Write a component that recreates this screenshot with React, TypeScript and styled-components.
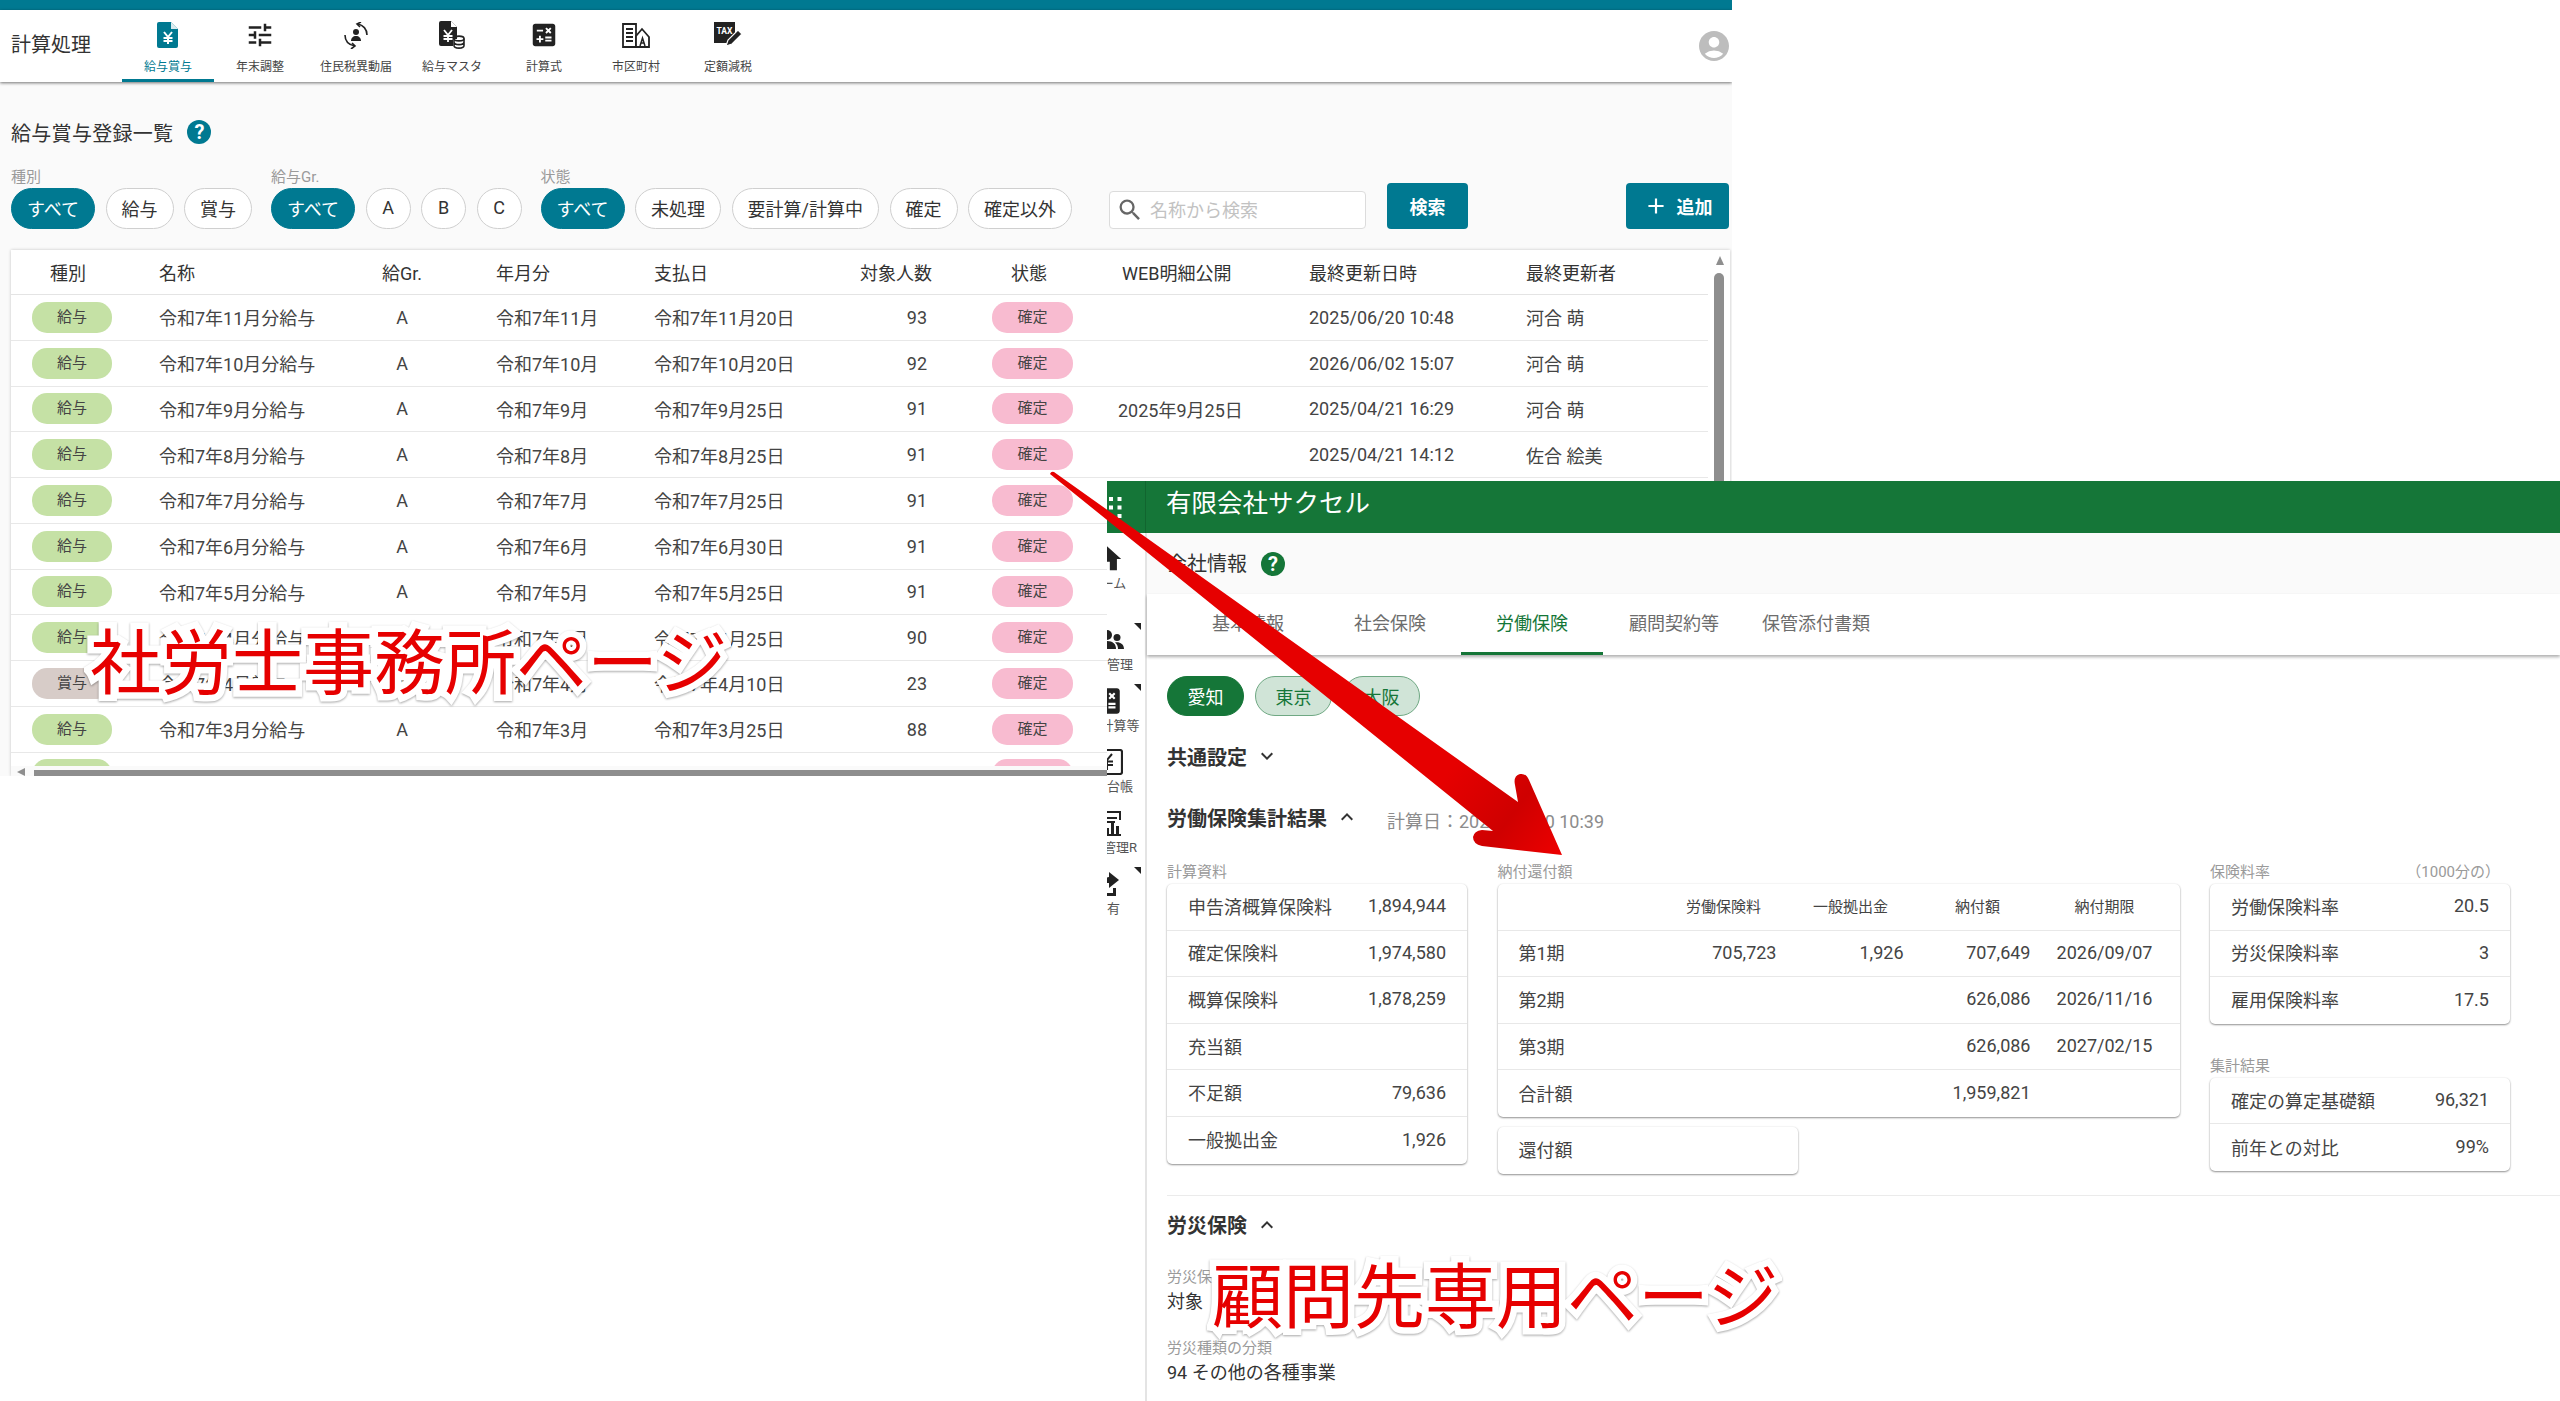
import React from "react";
import styled, { createGlobalStyle } from "styled-components";
import {
  MdAccountCircle,
  MdAdd,
  MdCalculate,
  MdHome,
  MdKeyboardArrowDown,
  MdKeyboardArrowUp,
  MdSearch,
  MdTune,
} from "react-icons/md";

const TEAL = "#007991";
const GREEN = "#157638";
const TEXT = "#3c3c3c";

const GlobalStyle = createGlobalStyle`
  html, body {
    margin: 0;
    background: #fff;
    font-family: Roboto, "Noto Sans CJK JP", sans-serif;
    color: ${TEXT};
  }
  * { box-sizing: border-box; }
`;

const Desktop = styled.div`
  position: relative;
  width: 2560px;
  height: 1401px;
  overflow: hidden;
  background: #fff;
`;

/* ---------- payroll window ---------- */

const PayrollWindow = styled.div`
  width: 1732px;
  height: 776px;
  background: #fafafa;
  display: flex;
  flex-direction: column;
  overflow: hidden;
`;

const TopStripe = styled.div`
  height: 10px;
  flex: none;
  background: ${TEAL};
`;

const AppBar = styled.div`
  height: 72px;
  flex: none;
  display: flex;
  align-items: stretch;
  background: #fff;
  box-shadow: 0 1px 3px rgba(0, 0, 0, 0.55);
  padding-left: 11px;
`;

const AppTitle = styled.div`
  width: 111px;
  font-size: 20px;
  line-height: 70px;
  color: #333;
`;

const NavTab = styled.div<{ $active?: boolean }>`
  min-width: 92px;
  padding: 11px 14px 0;
  display: flex;
  flex-direction: column;
  align-items: center;
  font-size: 12px;
  color: ${(p) => (p.$active ? TEAL : "#444")};
  border-bottom: 3px solid ${(p) => (p.$active ? TEAL : "transparent")};
`;

const NavIcon = styled.div`
  height: 28px;
  display: flex;
  align-items: center;
  justify-content: center;
  color: #222;
  margin-bottom: 8px;
`;

const Avatar = styled.div`
  margin-left: auto;
  display: flex;
  align-items: center;
  color: #bdbdbd;
`;

const PayrollBody = styled.div`
  flex: 1;
  min-height: 0;
  padding: 38px 2px 0 11px;
  display: flex;
  flex-direction: column;
`;

const HeadingRow = styled.div`
  display: flex;
  align-items: center;
  gap: 14px;
  height: 24px;
  margin-bottom: 25px;
`;

const Heading = styled.div`
  font-size: 20px;
  color: #333;
  letter-spacing: 0.3px;
`;

const HelpDot = styled.span<{ $color: string }>`
  width: 24px;
  height: 24px;
  border-radius: 50%;
  background: ${(p) => p.$color};
  color: #fff;
  font-size: 20px;
  font-weight: 700;
  display: flex;
  align-items: center;
  justify-content: center;
`;

const Toolbar = styled.div`
  display: flex;
  align-items: flex-end;
  height: 60px;
  flex: none;
`;

const FilterGroup = styled.div`
  margin-right: 19px;
`;

const FilterLabel = styled.div`
  font-size: 15px;
  line-height: 17px;
  color: #9a9a9a;
  margin-bottom: 2px;
`;

const ChipRow = styled.div`
  display: flex;
  gap: 10.5px;
`;

const Chip = styled.div<{ $on?: boolean }>`
  height: 41px;
  min-width: 45px;
  padding: 0 15px 2px;
  border-radius: 21px;
  display: flex;
  align-items: center;
  justify-content: center;
  font-size: 18px;
  background: ${(p) => (p.$on ? TEAL : "#fff")};
  color: ${(p) => (p.$on ? "#fff" : "#333")};
  border: 1px solid ${(p) => (p.$on ? TEAL : "#cfcfcf")};
`;

const SearchBox = styled.label`
  margin-left: 18px;
  width: 257px;
  height: 38px;
  display: flex;
  align-items: center;
  gap: 4px;
  padding-left: 6px;
  background: #fff;
  border: 1px solid #dcdcdc;
  border-radius: 4px;
  color: #666;
`;

const SearchInput = styled.input`
  border: 0;
  outline: 0;
  flex: 1;
  min-width: 0;
  background: transparent;
  font: inherit;
  font-size: 18px;
  &::placeholder {
    color: #c2c2c2;
    opacity: 1;
  }
`;

const ActionButton = styled.div<{ $wide?: boolean }>`
  height: 46px;
  width: ${(p) => (p.$wide ? "103px" : "81px")};
  margin-left: ${(p) => (p.$wide ? "auto" : "21px")};
  margin-right: ${(p) => (p.$wide ? "1px" : "0")};
  background: ${TEAL};
  color: #fff;
  border-radius: 4px;
  font-size: 18px;
  font-weight: 700;
  display: flex;
  align-items: center;
  justify-content: center;
  gap: 8px;
`;

const TableCard = styled.div`
  position: relative;
  margin-top: 21px;
  flex: 1;
  min-height: 0;
  background: #fff;
  box-shadow: 0 0 3px rgba(0, 0, 0, 0.22);
  overflow: hidden;
`;

const TableGrid = styled.div`
  width: 1697px;
`;

const PAY_COLUMNS = "148px 218px 50px 227px 206px 71px 187px 191px 217px 182px";

const HeadRow = styled.div`
  display: grid;
  grid-template-columns: ${PAY_COLUMNS};
  height: 45px;
  align-items: center;
  font-size: 18px;
  color: #333;
  border-bottom: 1px solid #e4e4e4;
`;

const BodyRow = styled.div`
  display: grid;
  grid-template-columns: ${PAY_COLUMNS};
  height: 45.75px;
  align-items: center;
  font-size: 18px;
  color: #444;
  border-bottom: 1px solid #e8e8e8;
`;

const Cell = styled.div<{ $pad?: number; $align?: string; $padRight?: number }>`
  padding-left: ${(p) => p.$pad ?? 0}px;
  padding-right: ${(p) => p.$padRight ?? 0}px;
  text-align: ${(p) => p.$align ?? "left"};
  white-space: nowrap;
`;

const Pill = styled.div<{ $bg: string; $width: number }>`
  width: ${(p) => p.$width}px;
  height: 31px;
  border-radius: 15px;
  background: ${(p) => p.$bg};
  font-size: 15px;
  line-height: 30px;
  text-align: center;
  color: #444;
`;

const VScrollArrow = styled.div`
  position: absolute;
  left: 1705px;
  top: 6px;
  width: 0;
  height: 0;
  border-left: 4px solid transparent;
  border-right: 4px solid transparent;
  border-bottom: 9px solid #8e8e8e;
`;

const VScrollThumb = styled.div`
  position: absolute;
  left: 1703px;
  top: 23px;
  width: 10px;
  bottom: 40px;
  border-radius: 5px;
  background: #8e8e8e;
`;

const HScrollTrack = styled.div`
  position: absolute;
  left: 0;
  right: 0;
  bottom: 0;
  height: 10px;
  background: #fafafa;
`;

const HScrollThumb = styled.div`
  position: absolute;
  left: 23px;
  right: 0;
  bottom: 0;
  height: 6px;
  background: #8e8e8e;
`;

const HScrollArrow = styled.div`
  position: absolute;
  left: 6px;
  bottom: 0;
  width: 0;
  height: 0;
  border-top: 4px solid transparent;
  border-bottom: 4px solid transparent;
  border-right: 8px solid #8e8e8e;
`;

/* ---------- client window ---------- */

const ClientWindow = styled.div`
  position: absolute;
  left: 1107px;
  top: 481px;
  right: 0;
  bottom: 0;
  display: flex;
  flex-direction: column;
  background: #fff;
`;

const GreenBar = styled.div`
  height: 52px;
  flex: none;
  background: ${GREEN};
  color: #fff;
  display: flex;
  align-items: center;
`;

const GridHandle = styled.div`
  width: 39px;
  height: 100%;
  display: flex;
  align-items: center;
  padding-left: 2px;
  border-right: 1px solid #11652f;
`;

const CompanyName = styled.div`
  margin-left: 20px;
  font-size: 25.5px;
  margin-top: -14px;
`;

const ClientBody = styled.div`
  flex: 1;
  min-height: 0;
  display: flex;
`;

const SideRail = styled.div`
  width: 40px;
  flex: none;
  overflow: hidden;
  border-right: 2px solid #e4e4e4;
  background: #fff;
`;

const SideInner = styled.div`
  width: 76px;
  margin-left: -38px;
  padding-top: 9px;
  display: flex;
  flex-direction: column;
`;

const SideItem = styled.div<{ $height: number }>`
  position: relative;
  height: ${(p) => p.$height}px;
  display: flex;
  flex-direction: column;
  align-items: center;
  font-size: 13px;
  color: #555;
  white-space: nowrap;
`;

const SideIcon = styled.div`
  height: 34px;
  display: flex;
  align-items: center;
  justify-content: center;
  color: #222;
  margin-bottom: -3px;
`;

const Corner = styled.div`
  position: absolute;
  right: 4px;
  top: 0;
  width: 0;
  height: 0;
  border-top: 7px solid #222;
  border-left: 7px solid transparent;
`;

const ClientMain = styled.div`
  flex: 1;
  min-width: 0;
  display: flex;
  flex-direction: column;
`;

const PageHead = styled.div`
  height: 61px;
  flex: none;
  background: #fafafa;
  display: flex;
  align-items: center;
  gap: 14px;
  padding-left: 20px;
`;

const PageTitle = styled.div`
  font-size: 20px;
  color: #333;
  margin-top: -2px;
`;

const TabBar = styled.div`
  height: 61px;
  flex: none;
  display: flex;
  padding-left: 30px;
  background: #fff;
  box-shadow: 0 2px 3px rgba(0, 0, 0, 0.32);
`;

const ClientTab = styled.div<{ $active?: boolean }>`
  width: 142px;
  text-align: center;
  line-height: 60px;
  font-size: 18px;
  white-space: nowrap;
  color: ${(p) => (p.$active ? GREEN : "#6d6d6d")};
  border-bottom: 3px solid ${(p) => (p.$active ? GREEN : "transparent")};
`;

const ClientContent = styled.div`
  flex: 1;
  padding: 21px 0 0 20px;
`;

const PrefRow = styled.div`
  display: flex;
  gap: 11px;
  margin-bottom: 24px;
`;

const PrefChip = styled.div<{ $on?: boolean }>`
  width: 77px;
  height: 40px;
  border-radius: 20px;
  display: flex;
  align-items: center;
  justify-content: center;
  font-size: 18px;
  background: ${(p) => (p.$on ? GREEN : "#d0e4d7")};
  color: ${(p) => (p.$on ? "#fff" : GREEN)};
  border: 1px solid ${(p) => (p.$on ? GREEN : "#6fa883")};
`;

const SectionHead = styled.div<{ $top?: number; $gap: number }>`
  display: flex;
  align-items: center;
  height: 32px;
  font-size: 20px;
  font-weight: 700;
  color: #333;
  margin-top: ${(p) => p.$top ?? 0}px;
  margin-bottom: ${(p) => p.$gap}px;
`;

const ChevronDown = styled(MdKeyboardArrowDown)`
  margin-left: 8px;
`;

const ChevronUp = styled(MdKeyboardArrowUp)`
  margin-left: 8px;
`;

const CalcDate = styled.span`
  margin-left: 28px;
  margin-top: 5px;
  font-size: 18px;
  font-weight: 400;
  color: #8c8c8c;
`;

const CardsGrid = styled.div`
  display: grid;
  grid-template-columns: 300px 682px 300px;
  column-gap: 30.5px;
  padding-bottom: 21px;
  border-bottom: 1px solid #ebebeb;
`;

const Stack = styled.div`
  display: flex;
  flex-direction: column;
`;

const CardLabel = styled.div<{ $top?: number }>`
  display: flex;
  justify-content: space-between;
  padding-right: 10px;
  height: 20px;
  line-height: 20px;
  font-size: 15px;
  color: #9a9a9a;
  margin-top: ${(p) => p.$top ?? 0}px;
  margin-bottom: 2px;
`;

const Card = styled.div<{ $width?: number }>`
  width: ${(p) => (p.$width ? `${p.$width}px` : "auto")};
  background: #fff;
  border-radius: 5px;
  box-shadow: 0 1px 2px rgba(0, 0, 0, 0.42), 0 0 2px rgba(0, 0, 0, 0.08);
  overflow: hidden;
`;

const KeyRow = styled.div`
  height: 46.6px;
  padding: 0 21px 2px;
  display: flex;
  align-items: center;
  justify-content: space-between;
  font-size: 18px;
  color: #444;
  border-bottom: 1px solid #e8e8e8;
  &:last-child {
    border-bottom: 0;
  }
`;

const PayTableRow = styled.div<{ $small?: boolean }>`
  height: 46.6px;
  padding-bottom: 2px;
  display: grid;
  grid-template-columns: 162.5px 127px 127px 127px 127px;
  align-items: center;
  font-size: ${(p) => (p.$small ? "15px" : "18px")};
  color: #444;
  border-bottom: 1px solid #e8e8e8;
  &:last-child {
    border-bottom: 0;
  }
`;

const RowTitle = styled.div`
  padding-left: 21px;
`;

const Money = styled.div`
  text-align: right;
  padding-right: 10.5px;
`;

const Center = styled.div`
  text-align: center;
`;

const Refund = styled(Card)`
  margin-top: 10px;
`;

const FieldLabel = styled.div<{ $top: number }>`
  font-size: 15px;
  color: #9a9a9a;
  line-height: 20px;
  margin-top: ${(p) => p.$top}px;
`;

const FieldValue = styled.div`
  font-size: 18px;
  line-height: 26px;
  color: #333;
  margin-top: 2px;
`;

/* ---------- overlays ---------- */

const Callout = styled.div<{ $left: number; $top: number }>`
  position: absolute;
  left: ${(p) => p.$left}px;
  top: ${(p) => p.$top}px;
  font-family: "Noto Sans CJK JP", sans-serif;
  font-size: 71px;
  line-height: 1;
  font-weight: 400;
  white-space: nowrap;
  color: #e60000;
  -webkit-text-stroke: 13px #fff;
  paint-order: stroke fill;
  filter: drop-shadow(0 1px 1px rgba(0, 0, 0, 0.35));
`;

const ArrowLayer = styled.svg`
  position: absolute;
  left: 0;
  top: 0;
  pointer-events: none;
`;

/* ---------- drawn icons ---------- */

const YenDoc = () => (
  <svg width="22" height="26" viewBox="0 0 22 26">
    <path d="M2 0h12l7 7v17a2 2 0 0 1-2 2H2a2 2 0 0 1-2-2V2a2 2 0 0 1 2-2z" fill={TEAL} />
    <path d="M14 0l7 7h-7z" fill="#fff" opacity="0.85" />
    <path d="M7 10l4 5 4-5M6.5 16h9M6.5 19h9M11 15v7" stroke="#fff" strokeWidth="2" fill="none" />
  </svg>
);

const ResidentTax = () => (
  <svg width="28" height="27" viewBox="0 0 28 27" fill="none" stroke="#222" strokeWidth="1.6">
    <path d="M16 2c5 1 9 5 9 11" />
    <path d="M19 0l-4 2 3 3" />
    <path d="M3 13c0 6 4 10 10 11" />
    <path d="M9 27l4-3-3-3" />
    <circle cx="14" cy="10" r="3" fill="#222" stroke="none" />
    <path d="M9 19c0-3 2-5 5-5s5 2 5 5z" fill="#222" stroke="none" />
  </svg>
);

const YenCoins = () => (
  <svg width="26" height="28" viewBox="0 0 26 28">
    <path d="M2 0h10l6 6v12h-4v7H2a2 2 0 0 1-2-2V2a2 2 0 0 1 2-2z" fill="#222" />
    <path d="M12 0l6 6h-6z" fill="#fff" />
    <path d="M5 9l4 5 4-5M4.5 15h9M4.5 18h9M9 14v7" stroke="#fff" strokeWidth="1.8" fill="none" />
    <ellipse cx="20" cy="17.5" rx="5" ry="2.4" fill="none" stroke="#222" strokeWidth="1.6" />
    <path d="M15 17.5v7c0 1.4 2.2 2.6 5 2.6s5-1.2 5-2.6v-7M15 21c0 1.4 2.2 2.6 5 2.6s5-1.2 5-2.6" fill="none" stroke="#222" strokeWidth="1.6" />
  </svg>
);

const TownDoc = () => (
  <svg width="28" height="25" viewBox="0 0 28 25" fill="none" stroke="#222" strokeWidth="1.8">
    <path d="M1 1h13v23H1z" />
    <path d="M4 6h7M4 10h7M4 14h7M4 18h7" />
    <path d="M14 13l6-7 7 8v10H14z" fill="#fff" />
    <path d="M18 23l2.5-8 2.5 8M19 20h3" strokeWidth="1.5" />
  </svg>
);

const TaxPen = () => (
  <svg width="28" height="26" viewBox="0 0 28 26">
    <path d="M0 0h21v15l-6 6H0z" fill="#222" />
    <text x="10.5" y="12" textAnchor="middle" fontSize="8.5" fontWeight="700" fill="#fff" fontFamily="Roboto, sans-serif">
      TAX
    </text>
    <path d="M12 24l2-6 10-10 4 4-10 10z" fill="#222" stroke="#fff" strokeWidth="1.2" />
  </svg>
);

const Dots = () => (
  <svg width="13" height="21" viewBox="0 0 13 21" fill="#fff">
    {[0, 8.5, 17].map((y) =>
      [0, 8.5].map((x) => <rect key={`${x}-${y}`} x={x} y={y} width="4" height="4" />)
    )}
  </svg>
);

const TeamIcon = () => (
  <svg width="38" height="20" viewBox="0 0 38 20" fill="#222">
    <circle cx="4" cy="5" r="4.5" />
    <circle cx="19" cy="5" r="5" />
    <circle cx="29" cy="7.5" r="3.5" />
    <path d="M9 19c0-5 4-8 10-8s9 3 9 8zM27 12.5c4-1 9 1 9 6.5h-6c0-3-1-5-3-6.5z" />
  </svg>
);

const LedgerIcon = () => (
  <svg width="32" height="26" viewBox="0 0 32 26" fill="none" stroke="#222" strokeWidth="2.2">
    <rect x="1" y="1" width="30" height="24" rx="2" />
    <path d="M11 5l5 6 5-6M10 12.5h12M10 16h12M16 11v10" strokeWidth="2" />
  </svg>
);

const ReportIcon = () => (
  <svg width="36" height="26" viewBox="0 0 36 26" fill="#222">
    <path d="M6 1h26v9h-2V3H8v4H6zM14 7h14v2H14zM8 12h5v2H8zM17 11h9v2h-9zM6 18h3v2H6z" />
    <path d="M17 24v-6h3v6zM22 24V13h3v11zM27 24v-8h3v8zM15 24h17v2H15z" />
  </svg>
);

const ShareIcon = () => (
  <svg width="30" height="24" viewBox="0 0 30 24" fill="#222">
    <path d="M2 11v13h22v-8h-3v5H5V11z" />
    <path d="M17 0l10 8-10 8v-5c-5 0-8 1-10 5 0-6 4-10 10-11z" />
  </svg>
);

/* ---------- data ---------- */

const navItems = [
  { label: "給与賞与", icon: <YenDoc />, active: true },
  { label: "年末調整", icon: <MdTune size={30} /> },
  { label: "住民税異動届", icon: <ResidentTax /> },
  { label: "給与マスタ", icon: <YenCoins /> },
  { label: "計算式", icon: <MdCalculate size={30} /> },
  { label: "市区町村", icon: <TownDoc /> },
  { label: "定額減税", icon: <TaxPen /> },
];

const filterGroups = [
  { label: "種別", chips: ["すべて", "給与", "賞与"] },
  { label: "給与Gr.", chips: ["すべて", "A", "B", "C"] },
  { label: "状態", chips: ["すべて", "未処理", "要計算/計算中", "確定", "確定以外"] },
];

type PayRow = {
  kind: string;
  name: string;
  group: string;
  month: string;
  pay: string;
  count: string;
  web?: string;
  updated?: string;
  by?: string;
};

const payRows: PayRow[] = [
  { kind: "給与", name: "令和7年11月分給与", group: "A", month: "令和7年11月", pay: "令和7年11月20日", count: "93", updated: "2025/06/20 10:48", by: "河合 萌" },
  { kind: "給与", name: "令和7年10月分給与", group: "A", month: "令和7年10月", pay: "令和7年10月20日", count: "92", updated: "2026/06/02 15:07", by: "河合 萌" },
  { kind: "給与", name: "令和7年9月分給与", group: "A", month: "令和7年9月", pay: "令和7年9月25日", count: "91", web: "2025年9月25日", updated: "2025/04/21 16:29", by: "河合 萌" },
  { kind: "給与", name: "令和7年8月分給与", group: "A", month: "令和7年8月", pay: "令和7年8月25日", count: "91", updated: "2025/04/21 14:12", by: "佐合 絵美" },
  { kind: "給与", name: "令和7年7月分給与", group: "A", month: "令和7年7月", pay: "令和7年7月25日", count: "91" },
  { kind: "給与", name: "令和7年6月分給与", group: "A", month: "令和7年6月", pay: "令和7年6月30日", count: "91" },
  { kind: "給与", name: "令和7年5月分給与", group: "A", month: "令和7年5月", pay: "令和7年5月25日", count: "91" },
  { kind: "給与", name: "令和7年4月分給与", group: "A", month: "令和7年4月", pay: "令和7年4月25日", count: "90" },
  { kind: "賞与", name: "令和7年4月賞与", group: "A", month: "令和7年4月", pay: "令和7年4月10日", count: "23" },
  { kind: "給与", name: "令和7年3月分給与", group: "A", month: "令和7年3月", pay: "令和7年3月25日", count: "88" },
  { kind: "給与", name: "令和7年2月分給与", group: "A", month: "令和7年2月", pay: "令和7年2月25日", count: "88" },
];

const sideItems = [
  { label: "ホーム", icon: <MdHome size={34} />, height: 81 },
  { label: "労務管理", icon: <TeamIcon />, corner: true, height: 61 },
  { label: "給与計算等", icon: <MdCalculate size={34} />, corner: true, height: 61 },
  { label: "給与台帳", icon: <LedgerIcon />, height: 61 },
  { label: "労務管理R", icon: <ReportIcon />, height: 61 },
  { label: "共有", icon: <ShareIcon />, corner: true, height: 61 },
];

const calcRows = [
  ["申告済概算保険料", "1,894,944"],
  ["確定保険料", "1,974,580"],
  ["概算保険料", "1,878,259"],
  ["充当額", ""],
  ["不足額", "79,636"],
  ["一般拠出金", "1,926"],
];

const rateRows = [
  ["労働保険料率", "20.5"],
  ["労災保険料率", "3"],
  ["雇用保険料率", "17.5"],
];

const totalRows = [
  ["確定の算定基礎額", "96,321"],
  ["前年との対比", "99%"],
];

const App = () => (
  <Desktop>
    <GlobalStyle />
    <PayrollWindow>
      <TopStripe />
      <AppBar>
        <AppTitle>計算処理</AppTitle>
        {navItems.map((item) => (
          <NavTab key={item.label} $active={item.active}>
            <NavIcon>{item.icon}</NavIcon>
            {item.label}
          </NavTab>
        ))}
        <Avatar>
          <MdAccountCircle size={36} />
        </Avatar>
      </AppBar>
      <PayrollBody>
        <HeadingRow>
          <Heading>給与賞与登録一覧</Heading>
          <HelpDot $color={TEAL}>?</HelpDot>
        </HeadingRow>
        <Toolbar>
          {filterGroups.map((group) => (
            <FilterGroup key={group.label}>
              <FilterLabel>{group.label}</FilterLabel>
              <ChipRow>
                {group.chips.map((chip, i) => (
                  <Chip key={chip} $on={i === 0}>
                    {chip}
                  </Chip>
                ))}
              </ChipRow>
            </FilterGroup>
          ))}
          <SearchBox>
            <MdSearch size={28} />
            <SearchInput placeholder="名称から検索" readOnly />
          </SearchBox>
          <ActionButton>検索</ActionButton>
          <ActionButton $wide>
            <MdAdd size={26} />
            追加
          </ActionButton>
        </Toolbar>
        <TableCard>
          <TableGrid>
            <HeadRow>
              <Cell $pad={39}>種別</Cell>
              <Cell>名称</Cell>
              <Cell $align="center">給Gr.</Cell>
              <Cell $pad={69}>年月分</Cell>
              <Cell>支払日</Cell>
              <Cell $align="right">対象人数</Cell>
              <Cell $pad={80}>状態</Cell>
              <Cell $pad={4}>WEB明細公開</Cell>
              <Cell>最終更新日時</Cell>
              <Cell>最終更新者</Cell>
            </HeadRow>
            {payRows.map((row) => (
              <BodyRow key={row.name}>
                <Cell $pad={21}>
                  <Pill $bg={row.kind === "賞与" ? "#d7ccc8" : "#c5e1a5"} $width={80}>
                    {row.kind}
                  </Pill>
                </Cell>
                <Cell>{row.name}</Cell>
                <Cell $align="center">{row.group}</Cell>
                <Cell $pad={69}>{row.month}</Cell>
                <Cell>{row.pay}</Cell>
                <Cell $align="right" $padRight={4}>
                  {row.count}
                </Cell>
                <Cell $pad={61}>
                  <Pill $bg="#f8bbd0" $width={81}>
                    確定
                  </Pill>
                </Cell>
                <Cell>{row.web}</Cell>
                <Cell>{row.updated}</Cell>
                <Cell>{row.by}</Cell>
              </BodyRow>
            ))}
          </TableGrid>
          <VScrollArrow />
          <VScrollThumb />
          <HScrollTrack>
            <HScrollArrow />
            <HScrollThumb />
          </HScrollTrack>
        </TableCard>
      </PayrollBody>
    </PayrollWindow>

    <ClientWindow>
      <GreenBar>
        <GridHandle>
          <Dots />
        </GridHandle>
        <CompanyName>有限会社サクセル</CompanyName>
      </GreenBar>
      <ClientBody>
        <SideRail>
          <SideInner>
            {sideItems.map((item) => (
              <SideItem key={item.label} $height={item.height}>
                {item.corner && <Corner />}
                <SideIcon>{item.icon}</SideIcon>
                {item.label}
              </SideItem>
            ))}
          </SideInner>
        </SideRail>
        <ClientMain>
          <PageHead>
            <PageTitle>会社情報</PageTitle>
            <HelpDot $color={GREEN}>?</HelpDot>
          </PageHead>
          <TabBar>
            <ClientTab>基本情報</ClientTab>
            <ClientTab>社会保険</ClientTab>
            <ClientTab $active>労働保険</ClientTab>
            <ClientTab>顧問契約等</ClientTab>
            <ClientTab>保管添付書類</ClientTab>
          </TabBar>
          <ClientContent>
            <PrefRow>
              <PrefChip $on>愛知</PrefChip>
              <PrefChip>東京</PrefChip>
              <PrefChip>大阪</PrefChip>
            </PrefRow>
            <SectionHead $gap={29}>
              共通設定
              <ChevronDown size={24} />
            </SectionHead>
            <SectionHead $gap={29}>
              労働保険集計結果
              <ChevronUp size={24} />
              <CalcDate>計算日：2025/06/20 10:39</CalcDate>
            </SectionHead>
            <CardsGrid>
              <Stack>
                <CardLabel>計算資料</CardLabel>
                <Card>
                  {calcRows.map(([k, v]) => (
                    <KeyRow key={k}>
                      <span>{k}</span>
                      <span>{v}</span>
                    </KeyRow>
                  ))}
                </Card>
              </Stack>
              <Stack>
                <CardLabel>納付還付額</CardLabel>
                <Card>
                  <PayTableRow $small>
                    <div />
                    <Center>労働保険料</Center>
                    <Center>一般拠出金</Center>
                    <Center>納付額</Center>
                    <Center>納付期限</Center>
                  </PayTableRow>
                  <PayTableRow>
                    <RowTitle>第1期</RowTitle>
                    <Money>705,723</Money>
                    <Money>1,926</Money>
                    <Money>707,649</Money>
                    <Center>2026/09/07</Center>
                  </PayTableRow>
                  <PayTableRow>
                    <RowTitle>第2期</RowTitle>
                    <div />
                    <div />
                    <Money>626,086</Money>
                    <Center>2026/11/16</Center>
                  </PayTableRow>
                  <PayTableRow>
                    <RowTitle>第3期</RowTitle>
                    <div />
                    <div />
                    <Money>626,086</Money>
                    <Center>2027/02/15</Center>
                  </PayTableRow>
                  <PayTableRow>
                    <RowTitle>合計額</RowTitle>
                    <div />
                    <div />
                    <Money>1,959,821</Money>
                    <div />
                  </PayTableRow>
                </Card>
                <Refund $width={300}>
                  <KeyRow>還付額</KeyRow>
                </Refund>
              </Stack>
              <Stack>
                <CardLabel>
                  <span>保険料率</span>
                  <span>（1000分の）</span>
                </CardLabel>
                <Card>
                  {rateRows.map(([k, v]) => (
                    <KeyRow key={k}>
                      <span>{k}</span>
                      <span>{v}</span>
                    </KeyRow>
                  ))}
                </Card>
                <CardLabel $top={32}>集計結果</CardLabel>
                <Card>
                  {totalRows.map(([k, v]) => (
                    <KeyRow key={k}>
                      <span>{k}</span>
                      <span>{v}</span>
                    </KeyRow>
                  ))}
                </Card>
              </Stack>
            </CardsGrid>
            <SectionHead $top={13} $gap={0}>
              労災保険
              <ChevronUp size={24} />
            </SectionHead>
            <FieldLabel $top={26}>労災保険</FieldLabel>
            <FieldValue>対象</FieldValue>
            <FieldLabel $top={23}>労災種類の分類</FieldLabel>
            <FieldValue>94 その他の各種事業</FieldValue>
          </ClientContent>
        </ClientMain>
      </ClientBody>
    </ClientWindow>

    <ArrowLayer width="2560" height="1401" viewBox="0 0 2560 1401">
      <defs>
        <linearGradient id="arrowFill" gradientUnits="userSpaceOnUse" x1="1050" y1="470" x2="1562" y2="855">
          <stop offset="0" stopColor="#e60000" />
          <stop offset="0.78" stopColor="#e60000" />
          <stop offset="0.9" stopColor="#cf0000" />
          <stop offset="1" stopColor="#ee0000" />
        </linearGradient>
      </defs>
      <path
        d="M1050 474 Q1051 471 1054 472 L1518 802 L1515 785 Q1513 776 1520 774 Q1526 773 1529 780 L1562 855 L1482 846 Q1473 844 1473 837 Q1474 831 1482 830 L1493 831 Z"
        fill="url(#arrowFill)"
      />
    </ArrowLayer>

    <Callout $left={90} $top={622}>社労士事務所ページ</Callout>
    <Callout $left={1212} $top={1256}>顧問先専用ページ</Callout>
  </Desktop>
);

export default App;
